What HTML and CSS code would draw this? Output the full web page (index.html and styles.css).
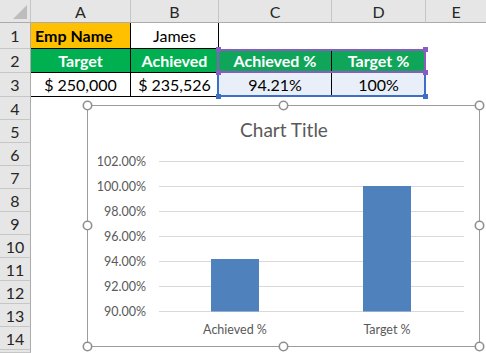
FILE: index.html
```html
<!DOCTYPE html>
<html>
<head>
<meta charset="utf-8">
<link rel="stylesheet" href="styles.css">
</head>
<body>
<div class="sheet">
  <div class="grid">
    <div class="corner"><svg width="30" height="22" viewBox="0 0 30 22"><polygon points="13,19 27,19 27,5" fill="#bdbdbd"/></svg></div>
    <div class="colhdr">A</div>
    <div class="colhdr">B</div>
    <div class="colhdr">C</div>
    <div class="colhdr">D</div>
    <div class="colhdr last">E</div>

    <div class="rowhdr">1</div>
    <div class="cell bd yellow bold left">Emp Name</div>
    <div class="cell bd">James</div>
    <div class="cell span3"></div>

    <div class="rowhdr">2</div>
    <div class="cell bd green bold">Target</div>
    <div class="cell bd green bold">Achieved</div>
    <div class="cell bd green2 bold">Achieved %</div>
    <div class="cell bd green2 bold">Target %</div>
    <div class="cell"></div>

    <div class="rowhdr">3</div>
    <div class="cell bd">$ 250,000</div>
    <div class="cell bd">$ 235,526</div>
    <div class="cell bd tint">94.21%</div>
    <div class="cell bd tint">100%</div>
    <div class="cell"></div>

    <div class="blank"></div>
    <div class="rowhdr">4</div>
    <div class="rowhdr">5</div>
    <div class="rowhdr">6</div>
    <div class="rowhdr">7</div>
    <div class="rowhdr">8</div>
    <div class="rowhdr">9</div>
    <div class="rowhdr">10</div>
    <div class="rowhdr">11</div>
    <div class="rowhdr">12</div>
    <div class="rowhdr">13</div>
    <div class="rowhdr">14</div>
    <div class="rowhdr"></div>
  </div>

  <div class="range blue"></div>
  <div class="range purple"></div>
  <span class="sq purple-sq s1"></span>
  <span class="sq purple-sq s2"></span>
  <span class="sq purple-sq s3"></span>
  <span class="sq purple-sq s4"></span>
  <span class="sq blue-sq s5"></span>
  <span class="sq blue-sq s6"></span>

  <div class="chart">
    <svg class="chart-svg" width="394" height="243" viewBox="0 0 394 243">
      <rect x="0.5" y="0.5" width="392" height="241" fill="#fff" stroke="#9c9c9c" stroke-width="1"/>
      <text class="title" x="197" y="32" text-anchor="middle">Chart Title</text>
      <g class="grid-lines" stroke="#d9d9d9" stroke-width="1">
        <line x1="72" y1="56.5" x2="377" y2="56.5"/>
        <line x1="72" y1="81.5" x2="377" y2="81.5"/>
        <line x1="72" y1="106.5" x2="377" y2="106.5"/>
        <line x1="72" y1="131.5" x2="377" y2="131.5"/>
        <line x1="72" y1="156.5" x2="377" y2="156.5"/>
        <line x1="72" y1="181.5" x2="377" y2="181.5"/>
        <line x1="72" y1="206.5" x2="377" y2="206.5"/>
      </g>
      <g class="axis" text-anchor="end">
        <text x="59" y="61">102.00%</text>
        <text x="59" y="86">100.00%</text>
        <text x="59" y="111">98.00%</text>
        <text x="59" y="136">96.00%</text>
        <text x="59" y="161">94.00%</text>
        <text x="59" y="186">92.00%</text>
        <text x="59" y="211">90.00%</text>
      </g>
      <rect x="124" y="154" width="48" height="52.5" fill="#4f81bd"/>
      <rect x="276" y="81" width="48" height="125.5" fill="#4f81bd"/>
      <g class="axis" text-anchor="middle">
        <text x="148" y="228.5">Achieved %</text>
        <text x="300" y="228.5">Target %</text>
      </g>
      <g class="handles" fill="#fff" stroke="#8f8f8f" stroke-width="1.6">
        <circle cx="0.5" cy="0.5" r="4.2"/>
        <circle cx="196.5" cy="0.5" r="4.2"/>
        <circle cx="392.5" cy="0.5" r="4.2"/>
        <circle cx="0.5" cy="120.5" r="4.2"/>
        <circle cx="392.5" cy="120.5" r="4.2"/>
        <circle cx="0.5" cy="241.5" r="4.2"/>
        <circle cx="196.5" cy="241.5" r="4.2"/>
        <circle cx="392.5" cy="241.5" r="4.2"/>
      </g>
    </svg>
  </div>
</div>
</body>
</html>
```

FILE: styles.css
```css
html, body {
  margin: 0;
  padding: 0;
  background: #fff;
  overflow: hidden;
}

.sheet {
  position: relative;
  width: 486px;
  height: 353px;
  font-family: Lato, "Liberation Sans", sans-serif;
  font-size: 16px;
  color: #000;
}

.grid {
  display: grid;
  grid-template-columns: 31px 100px 88px 113px 94px 1fr;
  grid-template-rows: 23px 26px 24px 24px repeat(11, 23px) 1fr;
  height: 100%;
}

.grid > div {
  box-sizing: border-box;
  display: flex;
  align-items: center;
  justify-content: center;
  min-width: 0;
  overflow: hidden;
  white-space: nowrap;
}

.corner {
  background: #e6e6e6;
  border-right: 1px solid #c6c6c6;
  border-bottom: 1px solid #ababab;
}

.corner svg {
  display: block;
}

.colhdr {
  background: #e6e6e6;
  border-right: 1px solid #c6c6c6;
  border-bottom: 1px solid #ababab;
  color: #262626;
  font-size: 16px;
  padding-top: 1px;
}

.colhdr.last {
  border-right: none;
}

.rowhdr {
  grid-column: 1;
  background: #e6e6e6;
  border-right: 1px solid #ababab;
  border-bottom: 1px solid #c6c6c6;
  color: #262626;
  font-size: 16px;
}

.cell {
  background: #fff;
}

.cell.bd {
  border-right: 1px solid #000;
  border-bottom: 1px solid #000;
}

.span3 {
  grid-column: span 3;
}

.blank {
  grid-column: 2 / -1;
  grid-row: 5 / -1;
}

.yellow {
  background: #ffc000;
}

.green {
  background: #00b050;
  color: #fff;
}

.green2 {
  background: #0fa65a;
  color: #fff;
}

.tint {
  background: #e9eff8;
}

.bold {
  font-weight: 700;
}

.grid > .left {
  justify-content: flex-start;
  padding-left: 4px;
}

.range {
  position: absolute;
  left: 217px;
  width: 209px;
  box-sizing: border-box;
  border: 2px solid;
}

.range.purple {
  top: 49px;
  height: 24px;
  border-color: #8a5cbf;
}

.range.blue {
  top: 71px;
  height: 26px;
  border-color: #3c6fc6;
}

.sq {
  position: absolute;
  width: 5px;
  height: 5px;
}

.purple-sq {
  background: #8a5cbf;
}

.blue-sq {
  background: #3c6fc6;
}

.s1 { left: 216px; top: 47px; }
.s2 { left: 423px; top: 47px; }
.s3 { left: 216px; top: 70px; }
.s4 { left: 423px; top: 70px; }
.s5 { left: 216px; top: 94px; }
.s6 { left: 423px; top: 94px; }

.chart {
  position: absolute;
  left: 87px;
  top: 105px;
  width: 394px;
  height: 243px;
}

.chart-svg {
  display: block;
  overflow: visible;
  font-family: Lato, "Liberation Sans", sans-serif;
}

.title {
  font-size: 19px;
  fill: #595959;
}

.axis text {
  font-size: 12.5px;
  fill: #595959;
}
```
